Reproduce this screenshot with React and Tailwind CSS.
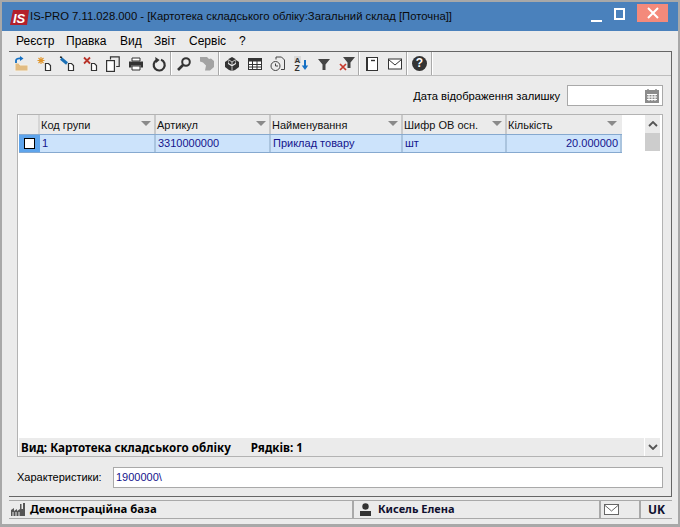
import React from "react";

const FONT = "font-['Liberation_Sans','Noto_Sans',sans-serif]";
const BOLD = "font-['Noto_Sans','Open_Sans',sans-serif] font-bold";

/* ---------------- toolbar icons ---------------- */

function DocBase() {
  return <path d="M9.5 7.5h3l2 2v5h-5z" fill="#fff" stroke="#333" strokeWidth="1.2" />;
}

const icons = {
  open: (
    <>
      <path d="M2 7h4l1 2h8v6H2z" fill="#e2bc82" stroke="#f5f0e6" />
      <path d="M3 7V4.5C3 3 5 2 8 2.5" fill="none" stroke="#1470c4" strokeWidth="1.8" />
      <path d="M7 0l3.5 2.6L7 5z" fill="#1470c4" />
    </>
  ),
  add: (
    <>
      <DocBase />
      <path d="M5 1v7M1.5 4.5h7M2.5 2l5 5M7.5 2l-5 5" stroke="#e0952b" strokeWidth="1.1" />
    </>
  ),
  edit: (
    <>
      <DocBase />
      <path d="M2 2.5l6 5" stroke="#1a6fb5" strokeWidth="3" />
      <path d="M1 1l2 .5" stroke="#222" strokeWidth="1.5" />
    </>
  ),
  remove: (
    <>
      <DocBase />
      <path d="M2 1.5l6 6M8 1.5l-6 6" stroke="#b8342a" strokeWidth="1.8" />
    </>
  ),
  copy: (
    <>
      <path d="M5.5 3.5V.8h8.7v9.7h-3" fill="none" stroke="#333" strokeWidth="1.2" />
      <rect x="1.6" y="4.6" width="7.8" height="10.8" fill="#fff" stroke="#333" strokeWidth="1.2" />
    </>
  ),
  print: (
    <>
      <path d="M4 2h8v3H4z" fill="#fff" stroke="#333" />
      <path d="M1 5.5h14v6h-2.5v-2h-9v2H1z" fill="#333" />
      <path d="M4 10h8v4H4z" fill="#fff" stroke="#333" />
    </>
  ),
  refresh: (
    <>
      <path d="M5.5 4.2A5.5 5.5 0 1 0 10 3.8" fill="none" stroke="#333" strokeWidth="2.2" />
      <path d="M4.2 1l4.5 3L5 7z" fill="#333" />
    </>
  ),
  search: (
    <>
      <circle cx="10" cy="6" r="3.8" fill="none" stroke="#333" strokeWidth="2" />
      <path d="M7 9l-5 5" stroke="#333" strokeWidth="2.6" />
    </>
  ),
  binoculars: (
    <path d="M1 1h7l2 2 2-.5 3 2.5v6l-4 3.5H6l1-5-3-3-3-1z" fill="#a3a3a3" />
  ),
  boxes: (
    <>
      <path d="M8 1l3.5 2v4L8 9 4.5 7V3z" fill="#333" />
      <path d="M1 6l3-2v4l4 2.5V15l-3-1-4-3zM15 6l-3-2v4l-4 2.5V15l3-1 4-3z" fill="#333" />
      <path d="M5 4l3 2 3-2M8 6v3" stroke="#ebebeb" strokeWidth="0.8" fill="none" />
      <path d="M8 10.5V15" stroke="#ebebeb" strokeWidth="0.8" />
    </>
  ),
  table: (
    <>
      <rect x="1.5" y="2.5" width="13" height="11" fill="#fff" stroke="#333" />
      <path d="M1.5 3h13v2.5h-13z" fill="#333" />
      <path d="M1.5 8.5h13M1.5 11h13M5.5 5v8M10 5v8" stroke="#333" />
    </>
  ),
  history: (
    <>
      <path d="M6 3.5V1h5.5l3 3v9.5H11" fill="none" stroke="#444" />
      <circle cx="5.5" cy="10" r="4.5" fill="#ebebeb" stroke="#444" />
      <path d="M5.5 7.5V10h2.5" fill="none" stroke="#444" />
    </>
  ),
  sort: (
    <>
      <rect x="1" y="0" width="7" height="7" fill="#d8d8d8" />
      <text x="1.6" y="6.5" fontSize="8" fontWeight="700" fill="#333" fontFamily="Liberation Sans">A</text>
      <text x="1.6" y="15" fontSize="8.5" fontWeight="700" fill="#333" fontFamily="Liberation Sans">Z</text>
      <path d="M12 4v8" stroke="#1470c4" strokeWidth="2" />
      <path d="M8.8 9.5h6.4L12 14z" fill="#1470c4" />
    </>
  ),
  filter: <path d="M2 3h12L9.5 8.5V14h-3V8.5z" fill="#444" />,
  filterOff: (
    <>
      <path d="M4 1h12l-4.5 5.5V12h-3V6.5z" fill="#444" />
      <path d="M1 8l6 6M7 8l-6 6" stroke="#c8392c" strokeWidth="1.7" />
    </>
  ),
  book: (
    <>
      <rect x="2.5" y="1.5" width="11" height="13" fill="#fff" stroke="#333" />
      <path d="M3 1.5h1v13H3z" fill="#333" />
      <path d="M7 4.5h4" stroke="#333" strokeWidth="1.4" />
    </>
  ),
  mail: (
    <>
      <rect x="1.5" y="3" width="13" height="10" fill="#fff" stroke="#333" />
      <path d="M1.5 3.5L8 9l6.5-5.5" fill="none" stroke="#333" />
    </>
  ),
};

function ToolIcon({ name }) {
  return (
    <div className="w-[23px] h-full flex items-center justify-center">
      <svg width="16" height="16" viewBox="0 0 16 16">
        {icons[name]}
      </svg>
    </div>
  );
}

function HelpIcon() {
  return (
    <div className="w-[23px] h-full flex items-center justify-center">
      <div className="w-[15px] h-[15px] rounded-full bg-[#333333] text-white text-[12px] leading-[15px] font-bold text-center">
        ?
      </div>
    </div>
  );
}

function Sep() {
  return <div className="w-[2px] h-[23px] bg-[#a9a9a9] border-r border-white" />;
}

/* ---------------- table ---------------- */

const columns = [
  { title: "Код групи", value: "1", width: "w-[116px]", line: "border-[#c9c9c9]" },
  { title: "Артикул", value: "3310000000", width: "w-[115px]", line: "border-[#c9c9c9]" },
  { title: "Найменування", value: "Приклад товару", width: "w-[132px]", line: "border-[#c9c9c9]" },
  { title: "Шифр ОВ осн.", value: "шт", width: "w-[104px]", line: "border-[#c9c9c9]" },
  { title: "Кількість", value: "20.000000", width: "w-[115px]", line: "border-[#ebebeb]", right: true },
];

function HeaderCell({ title, width, line }) {
  return (
    <div className={`${width} ${line} shrink-0 h-full bg-[#ebebeb] flex items-center justify-between pl-[1px] pr-[3px] border-r-2 text-[11px] text-[#111]`}>
      <span className="mt-[2px]">{title}</span>
      <span className="w-0 h-0 mt-[-3px] border-l-[5px] border-r-[5px] border-t-[5px] border-l-transparent border-r-transparent border-t-[#8a8a8a]" />
    </div>
  );
}

function DataCell({ value, width, right }) {
  return (
    <div className={`${width} shrink-0 h-full flex items-center px-[2px] border-r-2 border-[#aac4de] text-[11px] text-[#14148c] ${right ? "justify-end" : ""}`}>
      {value}
    </div>
  );
}

function Chevron({ up }) {
  return (
    <svg width="10" height="6" viewBox="0 0 10 6">
      <path d={up ? "M1 5l4-4 4 4" : "M1 1l4 4 4-4"} fill="none" stroke="#555" strokeWidth="1.8" />
    </svg>
  );
}

export default function App() {
  return (
    <div className={`${FONT} w-[680px] h-[527px] overflow-hidden flex flex-col bg-[#ebebeb] border-t-[2px] border-x-[2px] border-b-[3px] border-[#a8a8a8] text-black`}>
      {/* Title bar */}
      <div className="h-[29px] shrink-0 bg-[#4a81bc] flex items-center pl-[8px]">
        <svg width="19" height="15" viewBox="0 0 19 15" className="mt-[1px] shrink-0">
          <polygon points="3,0 19,0 17,15 0,15" fill="#b3202c" />
          <text x="3" y="12.5" fontSize="13" fontWeight="700" fontStyle="italic" fill="#fff" fontFamily="Liberation Sans">IS</text>
        </svg>
        <span className="ml-[1px] text-[11.3px] whitespace-nowrap text-[#0a0a0a]">
          IS-PRO 7.11.028.000 - [Картотека складського обліку:Загальний склад [Поточна]]
        </span>
        <div className="ml-auto flex items-center h-full">
          <div className="w-[11px] h-[2px] bg-white mt-[9px]" />
          <div className="w-[11px] h-[12px] ml-[12px] mt-[-5px] border-2 border-white" />
          <div className="w-[31px] h-[18px] ml-[12px] mr-[10px] mt-[-7px] bg-[#f48a7b] flex items-center justify-center">
            <svg width="12" height="12" viewBox="0 0 12 12">
              <path d="M1 1l10 10M11 1L1 11" stroke="#fff" strokeWidth="2" />
            </svg>
          </div>
        </div>
      </div>

      {/* Menu */}
      <div className="h-[20px] shrink-0 flex items-center pl-[14px] text-[12px]">
        <span className="w-[50px]">Реєстр</span>
        <span className="w-[54px]">Правка</span>
        <span className="w-[34px]">Вид</span>
        <span className="w-[35px]">Звіт</span>
        <span className="w-[50px]">Сервіс</span>
        <span>?</span>
      </div>

      {/* Main panel */}
      <div className="ml-[7px] mr-[6px] h-[446px] shrink-0 flex flex-col border-t border-r border-b border-[#666666]">
        {/* Toolbar */}
        <div className="h-[24px] shrink-0 flex items-center border-b border-[#bdbdbd]">
          <ToolIcon name="open" />
          <ToolIcon name="add" />
          <ToolIcon name="edit" />
          <ToolIcon name="remove" />
          <ToolIcon name="copy" />
          <ToolIcon name="print" />
          <ToolIcon name="refresh" />
          <Sep />
          <ToolIcon name="search" />
          <ToolIcon name="binoculars" />
          <Sep />
          <ToolIcon name="boxes" />
          <ToolIcon name="table" />
          <ToolIcon name="history" />
          <ToolIcon name="sort" />
          <ToolIcon name="filter" />
          <ToolIcon name="filterOff" />
          <Sep />
          <ToolIcon name="book" />
          <ToolIcon name="mail" />
          <Sep />
          <HelpIcon />
          <Sep />
        </div>

        <div className="flex-1 flex flex-col pl-[8px] pr-[8px] pt-[9px]">
          {/* Date filter */}
          <div className="h-[21px] shrink-0 flex items-center justify-end gap-[7px] text-[11.2px]">
            <span className="mt-[1px]">Дата відображення залишку</span>
            <div className="w-[96px] h-full bg-white border border-[#a9a9a9] flex items-center justify-end pr-[3px]">
              <svg width="14" height="14" viewBox="0 0 14 14">
                <rect x="0" y="1" width="14" height="13" fill="#8c8c8c" />
                <path d="M3 0v3M11 0v3" stroke="#8c8c8c" strokeWidth="1.5" />
                <path d="M2 5.5h10M2 8h10M2 10.5h10M4 5v7M7 5v7M10 5v7" stroke="#fff" />
              </svg>
            </div>
          </div>

          {/* Grid */}
          <div className="mt-[8px] h-[343px] shrink-0 flex border border-[#b3b3b3] bg-white">
            <div className="w-[626px] shrink-0 flex flex-col pl-[1px]">
              <div className="h-[19px] shrink-0 flex">
                <div className="w-[21px] shrink-0 h-full bg-[#ebebeb] border-r-2 border-[#d6d6d6]" />
                {columns.map((c) => (
                  <HeaderCell key={c.title} title={c.title} width={c.width} line={c.line} />
                ))}
              </div>
              <div className="h-[19px] shrink-0 flex">
                <div className="w-[603px] shrink-0 h-full flex bg-[#cce3fb] border-y border-[#86a9cf]">
                  <div className="w-[21px] shrink-0 h-full bg-[#5fa5ec] flex items-center justify-center">
                    <div className="w-[11px] h-[11px] bg-white border-[1.5px] border-black" />
                  </div>
                  {columns.map((c) => (
                    <DataCell key={c.title} value={c.value} width={c.width} right={c.right} />
                  ))}
                </div>
              </div>
              <div className="flex-1" />
              <div className={`${BOLD} h-[18px] shrink-0 bg-[#ebebeb] flex items-center pl-[2px] gap-[20px] text-[11.6px]`}>
                <span className="mt-[2px]">Вид: Картотека складського обліку</span>
                <span className="mt-[2px]">Рядків: 1</span>
              </div>
            </div>
            <div className="w-[17px] ml-auto mr-[1px] flex flex-col border-x border-white">
              <div className="h-[18px] shrink-0 bg-[#ebebeb] flex items-center justify-center">
                <Chevron up />
              </div>
              <div className="h-[18px] shrink-0 bg-[#cdcdcd]" />
              <div className="flex-1" />
              <div className="h-[18px] shrink-0 bg-[#ebebeb] flex items-center justify-center">
                <Chevron />
              </div>
            </div>
          </div>

          {/* Characteristics */}
          <div className="mt-[10px] h-[21px] shrink-0 flex items-center text-[11px]">
            <span className="w-[96px] shrink-0">Характеристики:</span>
            <div className="flex-1 h-full bg-white border border-[#a9a9a9] flex items-center pl-[2px] text-[#14148c]">
              1900000\
            </div>
          </div>
        </div>
      </div>

      {/* Status bar */}
      <div className={`${BOLD} ml-[7px] mr-[6px] mt-[3px] h-[19px] shrink-0 flex border-y border-[#a9a9a9] text-[11.3px]`}>
        <div className="w-[345px] shrink-0 flex items-center pl-[2px] gap-[3px] border-r-2 border-[#a9a9a9]">
          <svg width="16" height="13" viewBox="0 0 16 13">
            <path d="M0 13V7l3-2v3l3-2v2l3-2V1h1.5v5H12V0h2v13z" fill="#555" />
            <path d="M2 9v4M5 9v4M8 9v4" stroke="#ebebeb" />
          </svg>
          <span>Демонстраційна база</span>
        </div>
        <div className="w-[247px] shrink-0 flex items-center pl-[6px] gap-[7px] border-r-2 border-[#a9a9a9] text-[#101030] text-[11px]">
          <svg width="11" height="13" viewBox="0 0 11 13">
            <circle cx="5.5" cy="3.5" r="3.2" fill="#333" />
            <path d="M0 8h11v5H0z" fill="#333" />
          </svg>
          <span>Кисель Елена</span>
        </div>
        <div className="w-[40px] shrink-0 flex items-center pl-[3px] border-r-2 border-[#a9a9a9]">
          <svg width="15" height="11" viewBox="0 0 15 11">
            <rect x="0.5" y="0.5" width="14" height="10" fill="#fff" stroke="#666" />
            <path d="M0.5 1L7.5 7l7-6" fill="none" stroke="#666" />
          </svg>
        </div>
        <div className="flex-1 flex items-center justify-center text-[12px] text-[#101030]">UK</div>
      </div>
    </div>
  );
}
